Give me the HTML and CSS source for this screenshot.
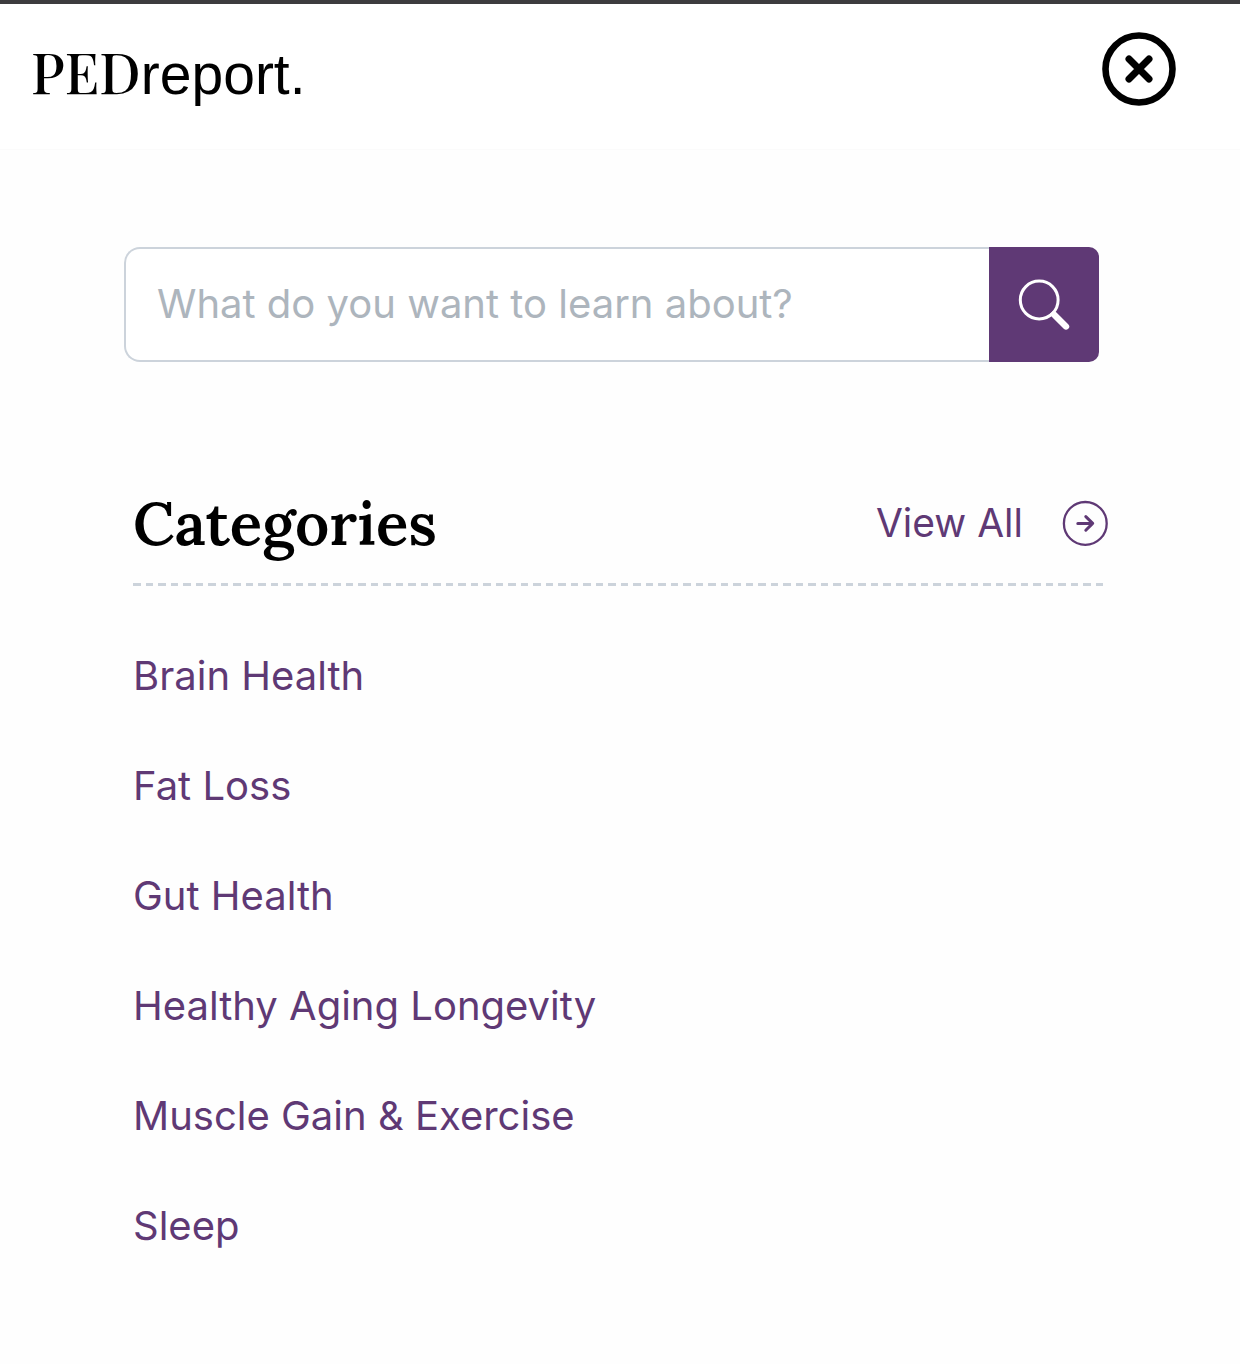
FILE: index.html
```html
<!DOCTYPE html>
<html lang="en">
<head>
<meta charset="utf-8">
<meta name="viewport" content="width=device-width, initial-scale=1">
<title>PEDreport.</title>
<link rel="stylesheet" href="styles.css">
</head>
<body>
<header class="header">
  <a class="logo" href="#"><span class="logo-serif">PED</span><span class="logo-sans">report.</span></a>
  <button class="close" type="button" aria-label="Close menu">
    <svg viewBox="0 0 74 74" width="74" height="74" fill="none" stroke="currentColor" stroke-linecap="round" aria-hidden="true">
      <circle cx="37" cy="37" r="33.5" stroke-width="6.6"/>
      <path d="M27 27 47 47M47 27 27 47" stroke-width="7"/>
    </svg>
  </button>
</header>
<main class="menu">
  <form class="search" role="search">
    <input class="search-input" type="search" aria-label="Search" placeholder="What do you want to learn about?">
    <button class="search-button" type="submit" aria-label="Search">
      <svg viewBox="0 0 52 52" width="52" height="52" fill="none" stroke="currentColor" aria-hidden="true">
        <circle cx="21.2" cy="21" r="18.9" stroke-width="3"/>
        <path d="M33.4 33.4 36 36" stroke-width="5"/>
        <path d="M36.5 36 48 47.4" stroke-width="6.4" stroke-linecap="round"/>
      </svg>
    </button>
  </form>
  <section class="categories" aria-labelledby="categories-title">
    <div class="categories-head">
      <h2 class="categories-title" id="categories-title">Categories</h2>
      <a class="view-all" href="#">View All
        <svg viewBox="0 0 46 46" width="46" height="46" fill="none" stroke="currentColor" stroke-linecap="round" stroke-linejoin="round" aria-hidden="true">
          <circle cx="23.3" cy="23.4" r="21.4" stroke-width="2.3"/>
          <path d="M15.8 23.4H30.5M23.8 16.6 30.7 23.4 23.8 30.2" stroke-width="3"/>
        </svg>
      </a>
    </div>
    <ul class="category-list">
      <li><a class="category" href="#">Brain Health</a></li>
      <li><a class="category" href="#">Fat Loss</a></li>
      <li><a class="category" href="#">Gut Health</a></li>
      <li><a class="category" href="#">Healthy Aging Longevity</a></li>
      <li><a class="category" href="#">Muscle Gain &amp; Exercise</a></li>
      <li><a class="category" href="#">Sleep</a></li>
    </ul>
  </section>
</main>
</body>
</html>
```
FILE: styles.css
```css
* { box-sizing: border-box; }

body {
  margin: 0;
  border-top: 4px solid #3d3c3e;
  background: #fefefe;
  color: #000;
  font-family: Inter, "Liberation Sans", sans-serif;
  font-size: 40px;
  line-height: 50px;
}

a { color: #5f3975; text-decoration: none; }

button {
  padding: 0;
  border: 0;
  background: none;
  cursor: pointer;
}

svg { display: block; flex: none; }

.header {
  display: flex;
  align-items: center;
  justify-content: space-between;
  padding: 28px 64px 43px 31px;
  border-bottom: 1px solid #fbfbfb;
  background: #fff;
}

.logo {
  display: flex;
  align-items: baseline;
  padding-top: 6px;
  color: #000;
  line-height: 60px;
}

.logo-serif { font-family: "Playfair Display", "Liberation Serif", serif; font-size: 56px; font-weight: 500; }
.logo-sans { font-family: "Liberation Sans", sans-serif; font-size: 57px; }

.close { color: #000; }

.menu { padding: 97px 132px 80px 124px; }

.search {
  display: flex;
  height: 115px;
  margin-right: 9px;
}

.search-input {
  flex: 1;
  min-width: 0;
  padding: 0 31px 2px;
  border: 2px solid #ccd3db;
  border-right: 0;
  border-radius: 16px 0 0 16px;
  background: #fff;
  color: #000;
  font: inherit;
  appearance: none;
}

.search-input::placeholder { color: #adb5bd; opacity: 1; }

.search-button {
  display: flex;
  align-items: center;
  justify-content: center;
  width: 110px;
  border-radius: 0 10px 10px 0;
  background: #5f3975;
  color: #fff;
}

.categories { padding: 124px 0 0 9px; }

.categories-head {
  display: flex;
  align-items: center;
  justify-content: space-between;
  padding-bottom: 26px;
  background: linear-gradient(to right, #ccd3db 8px, transparent 8px 13px, #ccd3db 13px 20px, transparent 20px) left bottom / 25px 3px;
  background-repeat: round no-repeat;
}

.categories-title {
  margin: 0;
  font-family: Lora, "Liberation Serif", serif;
  font-size: 60px;
  font-weight: 600;
  line-height: 74px;
}

.view-all {
  display: flex;
  align-items: center;
  gap: 39px;
  font-size: 39px;
}

.category-list {
  display: grid;
  gap: 60px;
  margin: 0;
  padding: 65px 0 0;
  list-style: none;
}

.category { display: block; }
```
